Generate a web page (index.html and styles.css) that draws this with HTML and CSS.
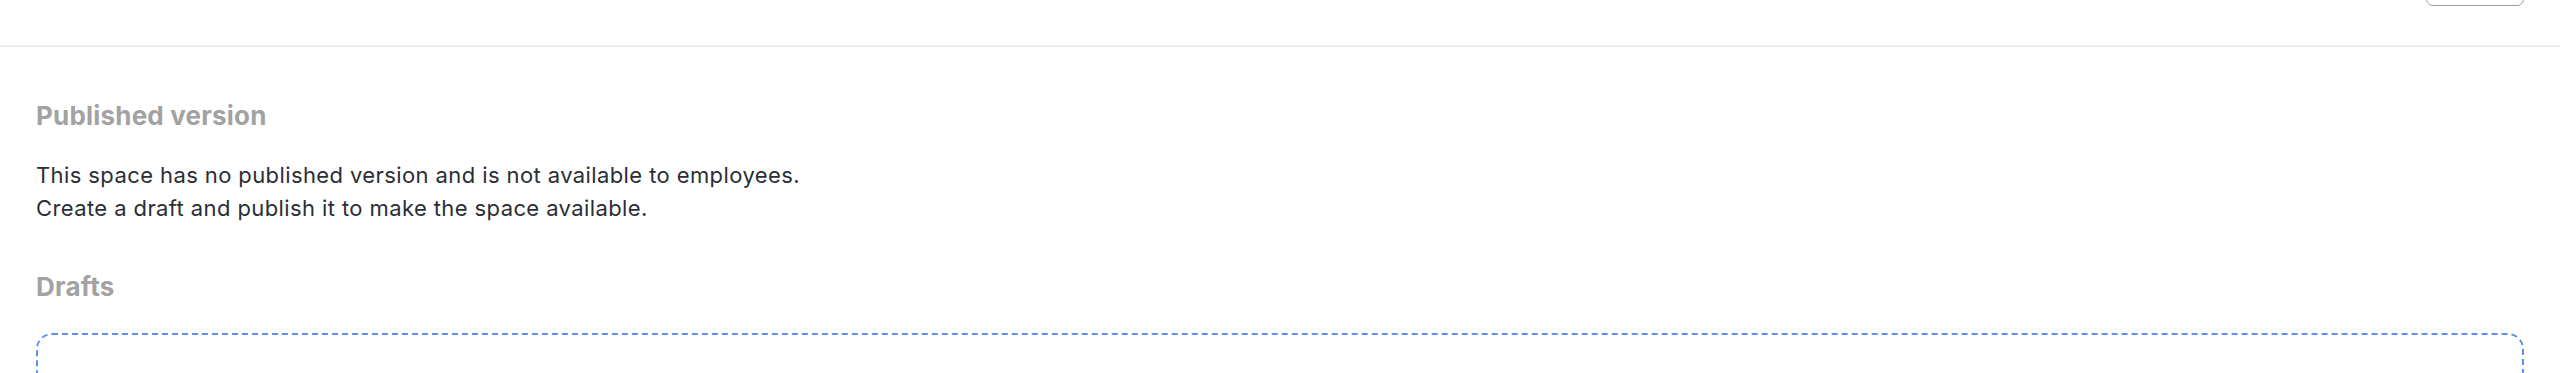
FILE: index.html
```html
<!DOCTYPE html>
<html lang="en">
<head>
    <meta charset="UTF-8">
    <meta name="viewport" content="width=device-width, initial-scale=1.0">
    <title>Space versions</title>
    <link rel="stylesheet" href="styles.css">
</head>
<body>
    <header class="topbar">
        <button class="topbar-btn" type="button" aria-label="Edit"></button>
    </header>

    <main class="content">
        <section class="section">
            <h2 class="section-title">Published version</h2>
            <p class="section-text">
                This space has no published version and is not available to employees.<br>
                Create a draft and publish it to make the space available.
            </p>
        </section>

        <section class="section drafts">
            <h2 class="section-title">Drafts</h2>
            <div class="drafts-box"></div>
        </section>
    </main>
</body>
</html>
```

FILE: styles.css
```css
body {
    margin: 0;
    background-color: #fff;
    color: #2b2e35;
    font-family: Inter, "Noto Sans", sans-serif;
    overflow: hidden;
}

.topbar {
    height: 45px;
    display: flex;
    justify-content: flex-end;
    padding: 0 36px;
    border-bottom: 2px solid #efefef;
}

.topbar-btn {
    margin-top: -35px;
    width: 98px;
    height: 41px;
    background: #fff;
    border: 1.5px solid #9c9c9c;
    border-radius: 7px;
}

.content {
    padding: 53px 36px 0;
}

.section-title {
    margin: 0;
    font-size: 26px;
    line-height: 32px;
    font-weight: 700;
    letter-spacing: 0.2px;
    color: #a2a2a2;
}

.section-text {
    margin: 27px 0 0;
    font-size: 22px;
    line-height: 33px;
    letter-spacing: 0.4px;
}

.drafts {
    margin-top: 46px;
}

.drafts-box {
    margin-top: 30px;
    height: 120px;
    border: 2px dashed #5f8ff0;
    border-radius: 16px;
}
```
